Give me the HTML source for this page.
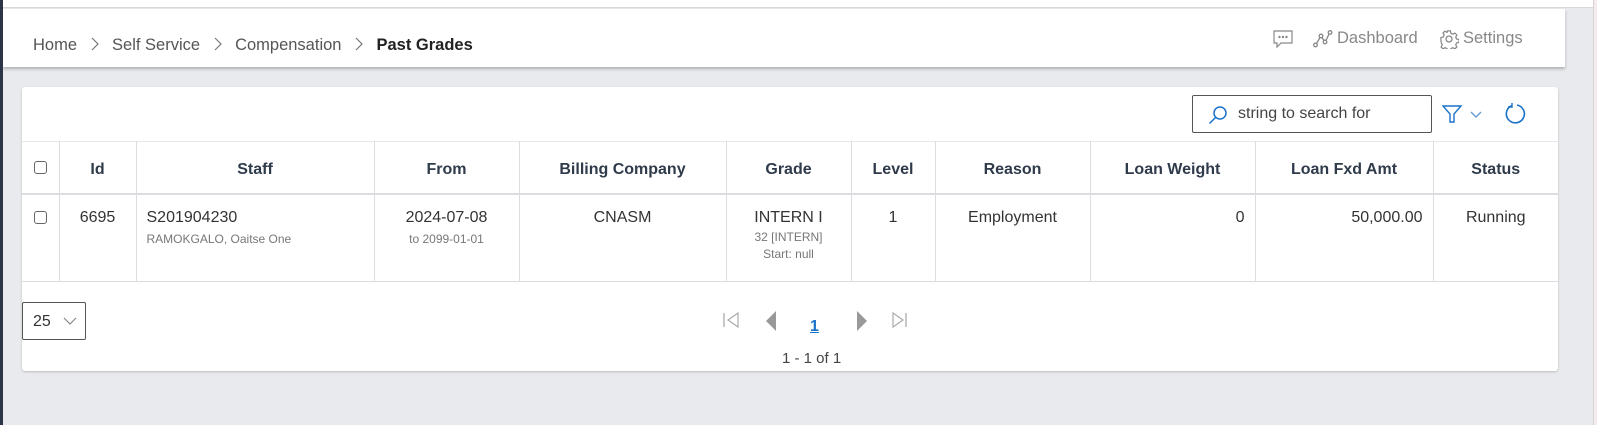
<!DOCTYPE html>
<html><head><style>
*{box-sizing:border-box;margin:0;padding:0}
body{width:1597px;height:425px;overflow:hidden;background:#e9eaed;font-family:"Liberation Sans",sans-serif;position:relative;color:#333}
.abs{position:absolute}
.top{left:0;top:0;width:1597px;height:8px;background:#fff;border-bottom:1px solid #d8d8dc}
.lb{left:0;top:0;width:3px;height:425px;background:#2c3548}
.hdr{left:3px;top:9px;width:1562px;height:58px;background:#fff;box-shadow:0 2px 3px rgba(0,0,0,.25)}
.rb{left:1593px;top:0;width:1px;height:425px;background:#d9d4d4}
.rp{left:1594px;top:0;width:3px;height:425px;background:#f4ecec}
.bc{left:33px;top:36px;font-size:16.5px;color:#555;white-space:nowrap}
.bc svg{margin:0 13px 0 14px;vertical-align:-1px}
.bc b{color:#222;font-weight:600}
.hr{top:29px;font-size:16.5px;color:#888}
.card{left:22px;top:87px;width:1536px;height:284px;background:#fff;border-radius:3px;box-shadow:0 1px 2px rgba(0,0,0,.2)}
.search{left:1192px;top:95px;width:240px;height:38px;border:1px solid #555;border-radius:2px;background:#fff}
.search span{position:absolute;left:45px;top:9px;font-size:16px;color:#444}
table{position:absolute;left:22px;top:141px;width:1536px;border-collapse:collapse;font-size:16px}
th{height:52px;border:1px solid #dcdde1;border-bottom:2px solid #dcdde1;font-weight:bold;color:#2f3a4a;font-size:16px;padding-top:6px}
td{height:88px;border:1px solid #dcdde1;vertical-align:top;padding-top:14px;text-align:center;color:#333}
td small{display:block;font-size:12px;color:#777;margin-top:5px}
tr>*:first-child{border-left:none}
tr>*:last-child{border-right:none}
th{border-top:1px solid #e8e8ec}
.cb{display:inline-block;width:13px;height:13px;border:1px solid #666;border-radius:3px}
.sel{left:22px;top:302px;width:64px;height:38px;border:1px solid #555;border-radius:2px;background:#fff;font-size:16px}
</style></head><body>
<div class="abs top"></div>
<div class="abs hdr"></div>
<div class="abs lb"></div>
<div class="abs rb"></div><div class="abs rp"></div>
<div class="abs bc">Home<svg width="8" height="14" viewBox="0 0 8 14" fill="none" stroke="#777" stroke-width="1.2"><path d="M1 1l6 6-6 6"/></svg>Self Service<svg width="8" height="14" viewBox="0 0 8 14" fill="none" stroke="#777" stroke-width="1.2"><path d="M1 1l6 6-6 6"/></svg>Compensation<svg width="8" height="14" viewBox="0 0 8 14" fill="none" stroke="#777" stroke-width="1.2"><path d="M1 1l6 6-6 6"/></svg><b>Past Grades</b></div>
<svg class="abs" style="left:1273px;top:30px" width="20" height="19" viewBox="0 0 20 19" fill="none" stroke="#888" stroke-width="1.2"><path d="M1 1h18v12H8l-4 4v-4H1z"/><circle cx="6.5" cy="7" r=".6" fill="#888"/><circle cx="10" cy="7" r=".6" fill="#888"/><circle cx="13.5" cy="7" r=".6" fill="#888"/></svg>
<svg class="abs" style="left:1313px;top:30px" width="20" height="18" viewBox="0 0 20 18" fill="none" stroke="#888" stroke-width="1.3"><circle cx="2.5" cy="15" r="1.8"/><circle cx="8" cy="6" r="1.8"/><circle cx="12" cy="12" r="1.8"/><circle cx="17" cy="2.5" r="1.8"/><path d="M3.5 13.5L7 7.5M9 7.5l2 3M13 10.5l3-6.5"/></svg>
<div class="abs hr" style="left:1337px">Dashboard</div>
<svg class="abs" style="left:1439px;top:29px" width="20" height="20" viewBox="0 0 20 20" fill="none" stroke="#888" stroke-width="1.3"><circle cx="10" cy="10" r="3"/><path d="M8.5 1.5h3l.5 2.5 2 1 2.3-1.2 2 2-1.2 2.3 1 2 2.4.5v3l-2.4.5-1 2 1.2 2.3-2 2-2.3-1.2-2 1-.5 2.4h-3l-.5-2.4-2-1-2.3 1.2-2-2 1.2-2.3-1-2L1.5 11.5v-3l2.4-.5 1-2L3.7 3.8l2-2L8 3l.5-1.5z" transform="scale(.95) translate(.5 .5)"/></svg>
<div class="abs hr" style="left:1463px">Settings</div>
<div class="abs card"></div>
<div class="abs search"><svg style="position:absolute;left:15px;top:9px" width="20" height="20" viewBox="0 0 20 20" fill="none" stroke="#1a73c9" stroke-width="1.5"><circle cx="12" cy="8" r="6"/><path d="M7.5 12.5L1.5 18.5"/></svg><span>string to search for</span></div>
<svg class="abs" style="left:1442px;top:104px" width="48" height="20" viewBox="0 0 48 20" fill="none" stroke="#1a73c9" stroke-width="1.4"><path d="M1 2h18l-7 8v8h-4v-8z"/><path d="M29 8l5 5 5-5" stroke="#6a9bd0"/></svg>
<svg class="abs" style="left:1504px;top:102px" width="24" height="24" viewBox="0 0 24 24" fill="none" stroke="#1a73c9" stroke-width="1.6"><path d="M8 3.5A9 9 0 1 0 13 3"/><path d="M8 1v4h-4" stroke-width="1.4"/></svg>
<table>
<tr><th style="width:37px"><span class="cb"></span></th><th style="width:77px">Id</th><th style="width:238px">Staff</th><th style="width:145px">From</th><th style="width:207px">Billing Company</th><th style="width:125px">Grade</th><th style="width:84px">Level</th><th style="width:155px">Reason</th><th style="width:165px">Loan Weight</th><th style="width:178px">Loan Fxd Amt</th><th>Status</th></tr>
<tr><td style="padding-top:16px"><span class="cb"></span></td><td>6695</td><td style="text-align:left;padding-left:10px">S201904230<small>RAMOKGALO, Oaitse One</small></td><td>2024-07-08<small>to 2099-01-01</small></td><td>CNASM</td><td>INTERN I<small style="margin-top:3px">32 [INTERN]</small><small style="margin-top:3px">Start: null</small></td><td>1</td><td>Employment</td><td style="text-align:right;padding-right:10px">0</td><td style="text-align:right;padding-right:10px">50,000.00</td><td>Running</td></tr>
</table>
<div class="abs sel"><span style="position:absolute;left:10px;top:10px">25</span><svg style="position:absolute;left:40px;top:14px" width="14" height="9" viewBox="0 0 14 9" fill="none" stroke="#888" stroke-width="1.2"><path d="M1 1l6 6 6-6"/></svg></div>
<svg class="abs" style="left:722px;top:310px" width="190" height="22" viewBox="0 0 190 22"><path d="M2 3v14" stroke="#aaa" stroke-width="1.3"/><path d="M16 3v14L6 10z" fill="none" stroke="#aaa" stroke-width="1.2"/><path d="M54 1v20L44 11z" fill="#999"/><path d="M135 1v20l10-10z" fill="#999"/><path d="M171 3v14l10-7z" fill="none" stroke="#aaa" stroke-width="1.2"/><path d="M184 3v14" stroke="#aaa" stroke-width="1.3"/></svg>
<div class="abs" style="left:810px;top:318px;font-size:16px;font-weight:bold;color:#1a73c9;text-decoration:underline">1</div>
<div class="abs" style="left:782px;top:350px;font-size:15px;color:#444">1 - 1 of 1</div>
</body></html>
